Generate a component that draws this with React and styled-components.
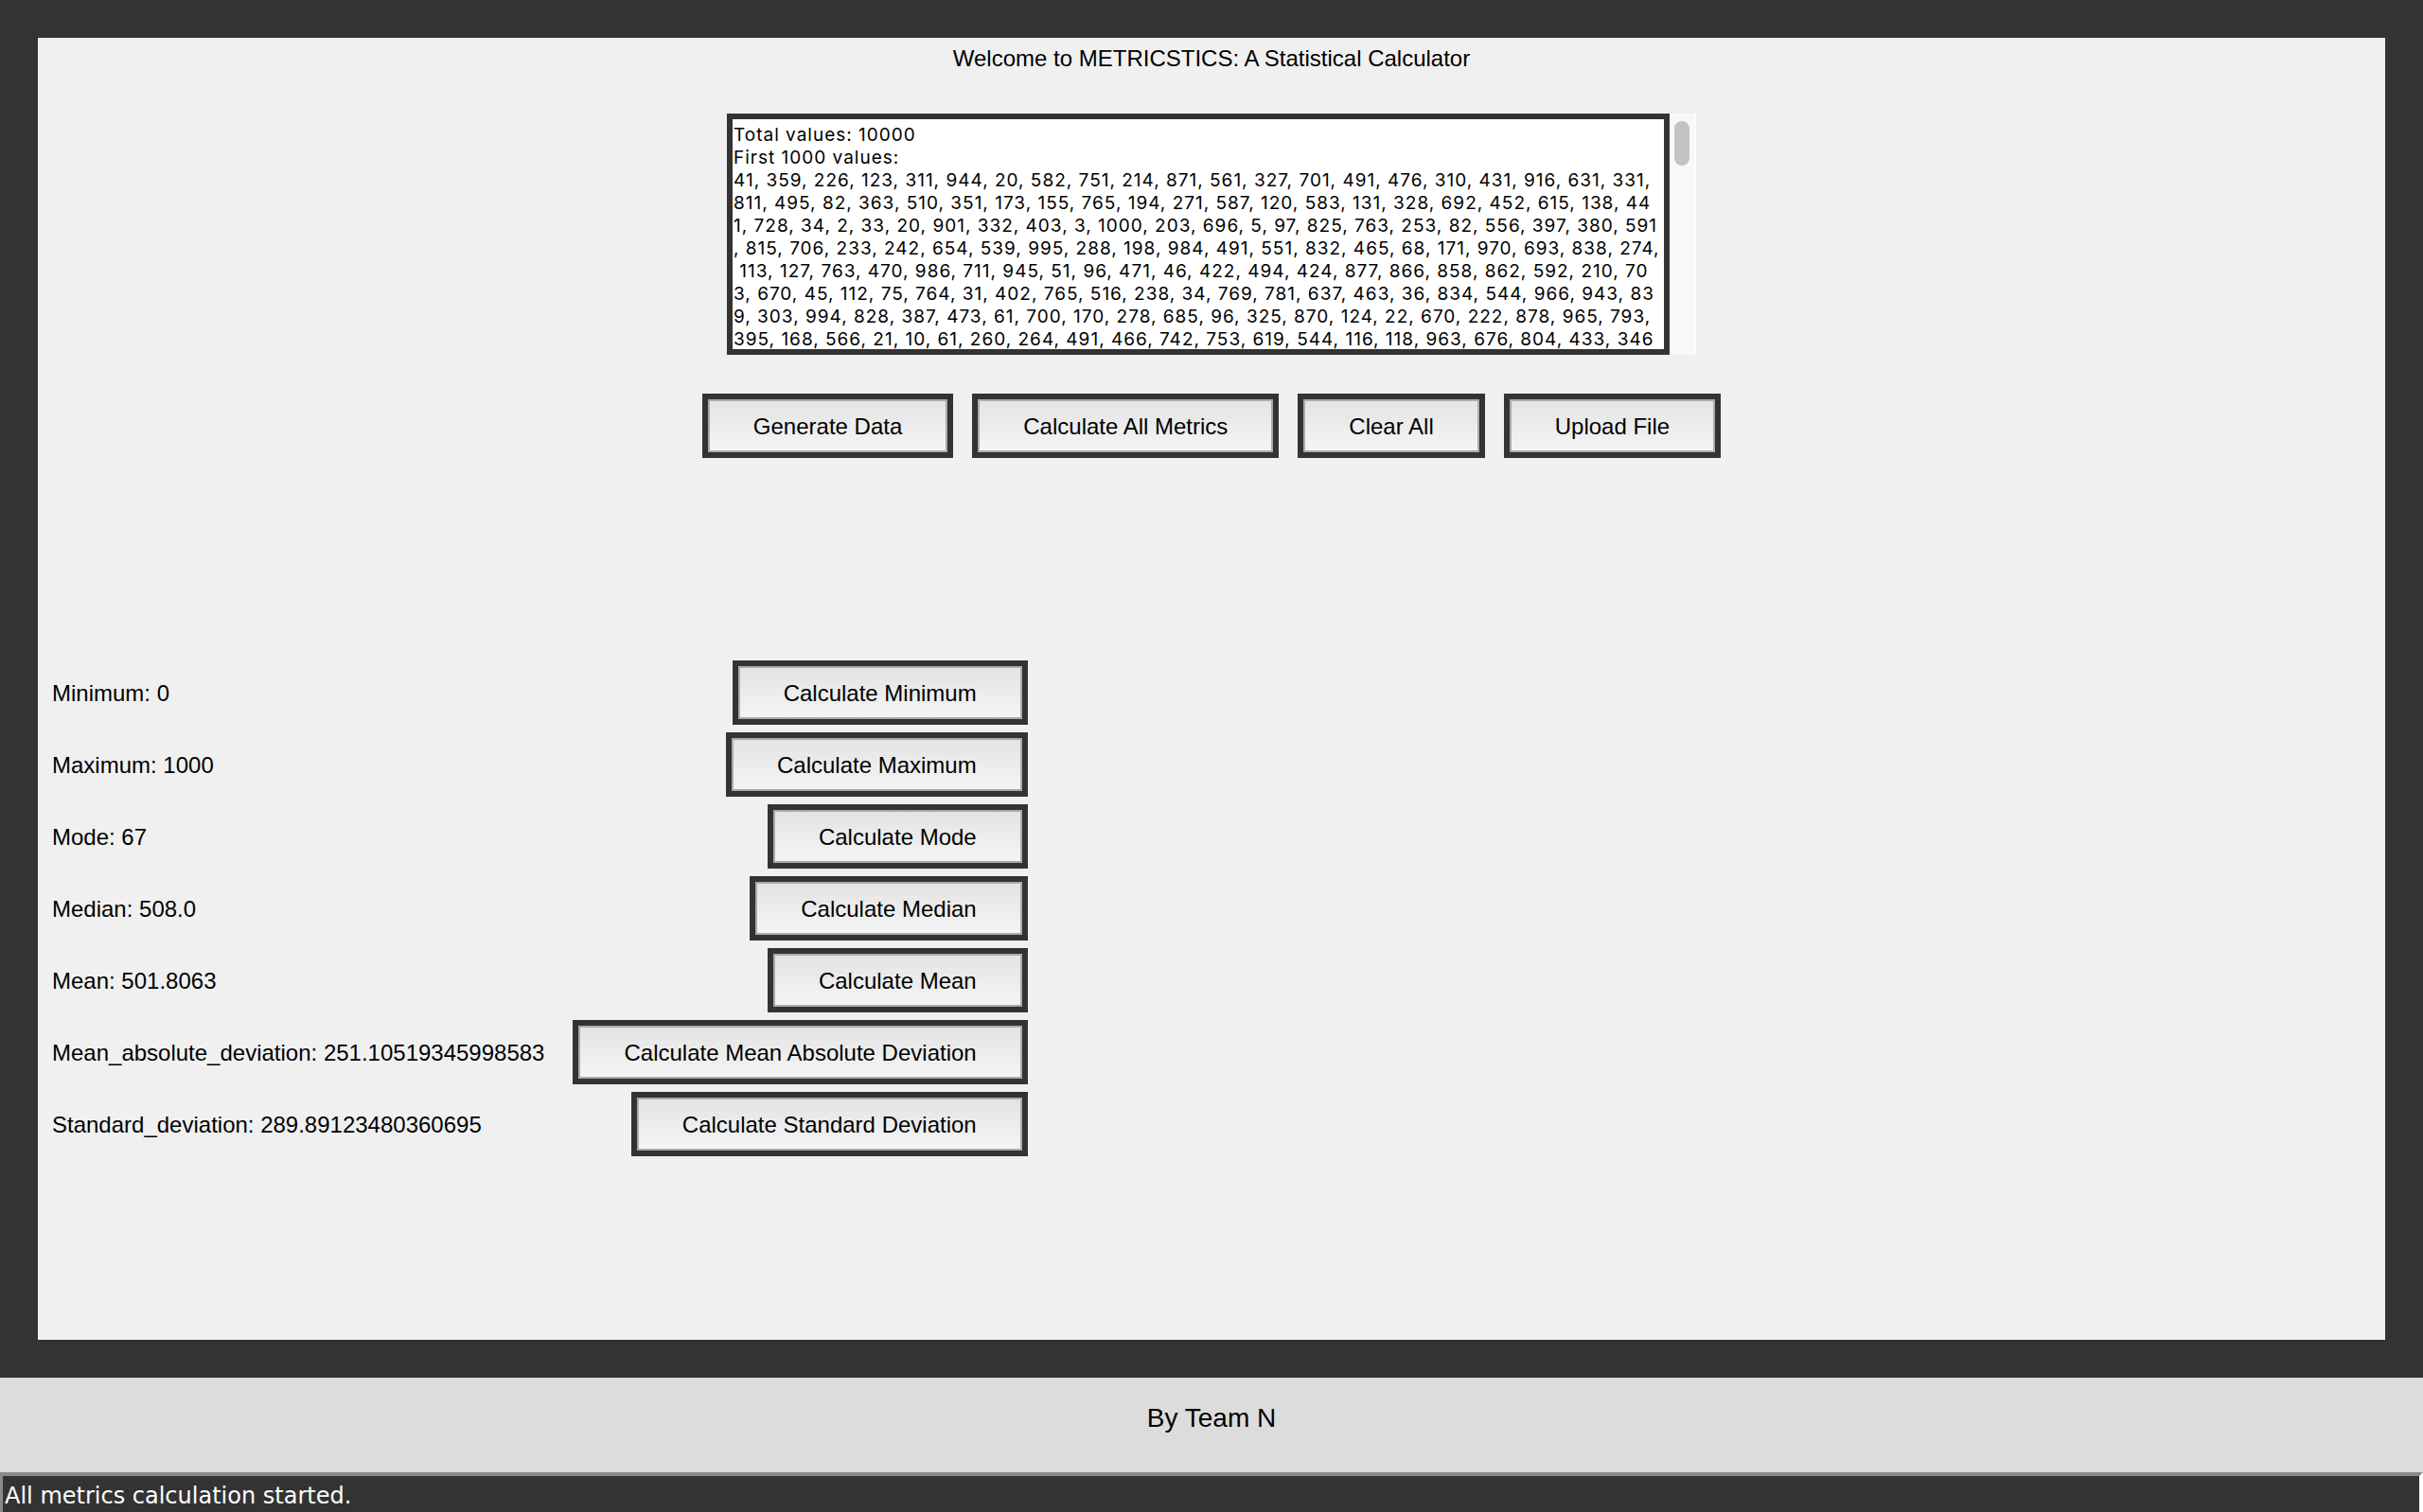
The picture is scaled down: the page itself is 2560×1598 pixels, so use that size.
import React from "react";
import styled, { createGlobalStyle } from "styled-components";

const GlobalStyle = createGlobalStyle`
  html, body {
    margin: 0;
    padding: 0;
    background-color: #333333;
    overflow: hidden;
  }
`;

const Window = styled.div`
  height: 1598px;
  display: flex;
  flex-direction: column;
  background-color: #333333;
  font-family: "Liberation Sans", Arial, sans-serif;
`;

const Panel = styled.div`
  margin: 40px 40px 0;
  height: 1376px;
  flex-shrink: 0;
  background-color: #f0f0f0;
  display: flex;
  flex-direction: column;
`;

const Title = styled.div`
  padding-top: 8px;
  font-size: 24px;
  line-height: 28px;
  text-align: center;
  color: #000;
`;

const DataRow = styled.div`
  display: flex;
  justify-content: center;
  margin-top: 44px;
`;

const DataBox = styled.div`
  box-sizing: border-box;
  width: 996px;
  height: 255px;
  border: 6px solid #333333;
  background-color: #ffffff;
  padding: 5px 0 0 1px;
  overflow: hidden;
  font-family: Inter, "DejaVu Sans", sans-serif;
  font-size: 19px;
  letter-spacing: 1px;
  line-height: 24px;
  color: #000;
`;

const DataLine = styled.div`
  white-space: pre;
`;

const ScrollTrack = styled.div`
  width: 28px;
  height: 255px;
  background-color: #f8f8f8;
  border-right: 2px solid #fdfdfd;
  display: flex;
  justify-content: center;
  padding-top: 8px;
  box-sizing: border-box;
`;

const Thumb = styled.div`
  width: 16px;
  height: 47px;
  border-radius: 8px;
  background-color: #c3c3c3;
`;

const ButtonBar = styled.div`
  display: flex;
  justify-content: center;
  gap: 20px;
  margin-top: 41px;
`;

const Button = styled.button`
  box-sizing: border-box;
  height: 68px;
  padding: 2px 48px 0;
  border: 6px solid #333333;
  box-shadow: inset 0 0 0 2px #aaaaaa;
  background: linear-gradient(#e3e3e3, #f5f5f5);
  font-family: "Liberation Sans", Arial, sans-serif;
  font-size: 24px;
  color: #000;
  white-space: nowrap;
  cursor: pointer;
`;

const MetricsGrid = styled.div`
  display: grid;
  grid-template-columns: auto auto;
  justify-content: start;
  align-items: center;
  margin-top: 210px;
`;

const MetricLabel = styled.div`
  padding: 2px 15px 0;
  font-size: 24px;
  color: #000;
  white-space: nowrap;
`;

const MetricButton = styled(Button)`
  justify-self: end;
  margin: 4px 15px;
`;

const Footer = styled.div`
  margin-top: 40px;
  height: 100px;
  flex-shrink: 0;
  box-sizing: border-box;
  padding-top: 27px;
  background-color: #dcdcdc;
  text-align: center;
  font-size: 28px;
  line-height: 32px;
  color: #000;
`;

const StatusBar = styled.div`
  flex: 1;
  background-color: #333333;
  border-top: 4px solid #8a8a8a;
  border-left: 3px solid #8a8a8a;
  border-right: 4px solid #ffffff;
  padding: 7px 0 0 2px;
  font-family: "DejaVu Sans", sans-serif;
  font-size: 24px;
  line-height: 28px;
  color: #ffffff;
`;

const lines = [
  "Total values: 10000",
  "First 1000 values:",
  "41, 359, 226, 123, 311, 944, 20, 582, 751, 214, 871, 561, 327, 701, 491, 476, 310, 431, 916, 631, 331,",
  "811, 495, 82, 363, 510, 351, 173, 155, 765, 194, 271, 587, 120, 583, 131, 328, 692, 452, 615, 138, 44",
  "1, 728, 34, 2, 33, 20, 901, 332, 403, 3, 1000, 203, 696, 5, 97, 825, 763, 253, 82, 556, 397, 380, 591",
  ", 815, 706, 233, 242, 654, 539, 995, 288, 198, 984, 491, 551, 832, 465, 68, 171, 970, 693, 838, 274,",
  " 113, 127, 763, 470, 986, 711, 945, 51, 96, 471, 46, 422, 494, 424, 877, 866, 858, 862, 592, 210, 70",
  "3, 670, 45, 112, 75, 764, 31, 402, 765, 516, 238, 34, 769, 781, 637, 463, 36, 834, 544, 966, 943, 83",
  "9, 303, 994, 828, 387, 473, 61, 700, 170, 278, 685, 96, 325, 870, 124, 22, 670, 222, 878, 965, 793,",
  "395, 168, 566, 21, 10, 61, 260, 264, 491, 466, 742, 753, 619, 544, 116, 118, 963, 676, 804, 433, 346",
];

const metrics = [
  { label: "Minimum: 0", action: "Calculate Minimum" },
  { label: "Maximum: 1000", action: "Calculate Maximum" },
  { label: "Mode: 67", action: "Calculate Mode" },
  { label: "Median: 508.0", action: "Calculate Median" },
  { label: "Mean: 501.8063", action: "Calculate Mean" },
  {
    label: "Mean_absolute_deviation: 251.10519345998583",
    action: "Calculate Mean Absolute Deviation",
  },
  {
    label: "Standard_deviation: 289.89123480360695",
    action: "Calculate Standard Deviation",
  },
];

const App = () => {
  return (
    <>
      <GlobalStyle />
      <Window>
        <Panel>
          <Title>Welcome to METRICSTICS: A Statistical Calculator</Title>
          <DataRow>
            <DataBox>
              {lines.map((line, i) => (
                <DataLine key={i}>{line}</DataLine>
              ))}
            </DataBox>
            <ScrollTrack>
              <Thumb />
            </ScrollTrack>
          </DataRow>
          <ButtonBar>
            <Button>Generate Data</Button>
            <Button>Calculate All Metrics</Button>
            <Button>Clear All</Button>
            <Button>Upload File</Button>
          </ButtonBar>
          <MetricsGrid>
            {metrics.map((m) => (
              <React.Fragment key={m.action}>
                <MetricLabel>{m.label}</MetricLabel>
                <MetricButton>{m.action}</MetricButton>
              </React.Fragment>
            ))}
          </MetricsGrid>
        </Panel>
        <Footer>By Team N</Footer>
        <StatusBar>All metrics calculation started.</StatusBar>
      </Window>
    </>
  );
};

export default App;
